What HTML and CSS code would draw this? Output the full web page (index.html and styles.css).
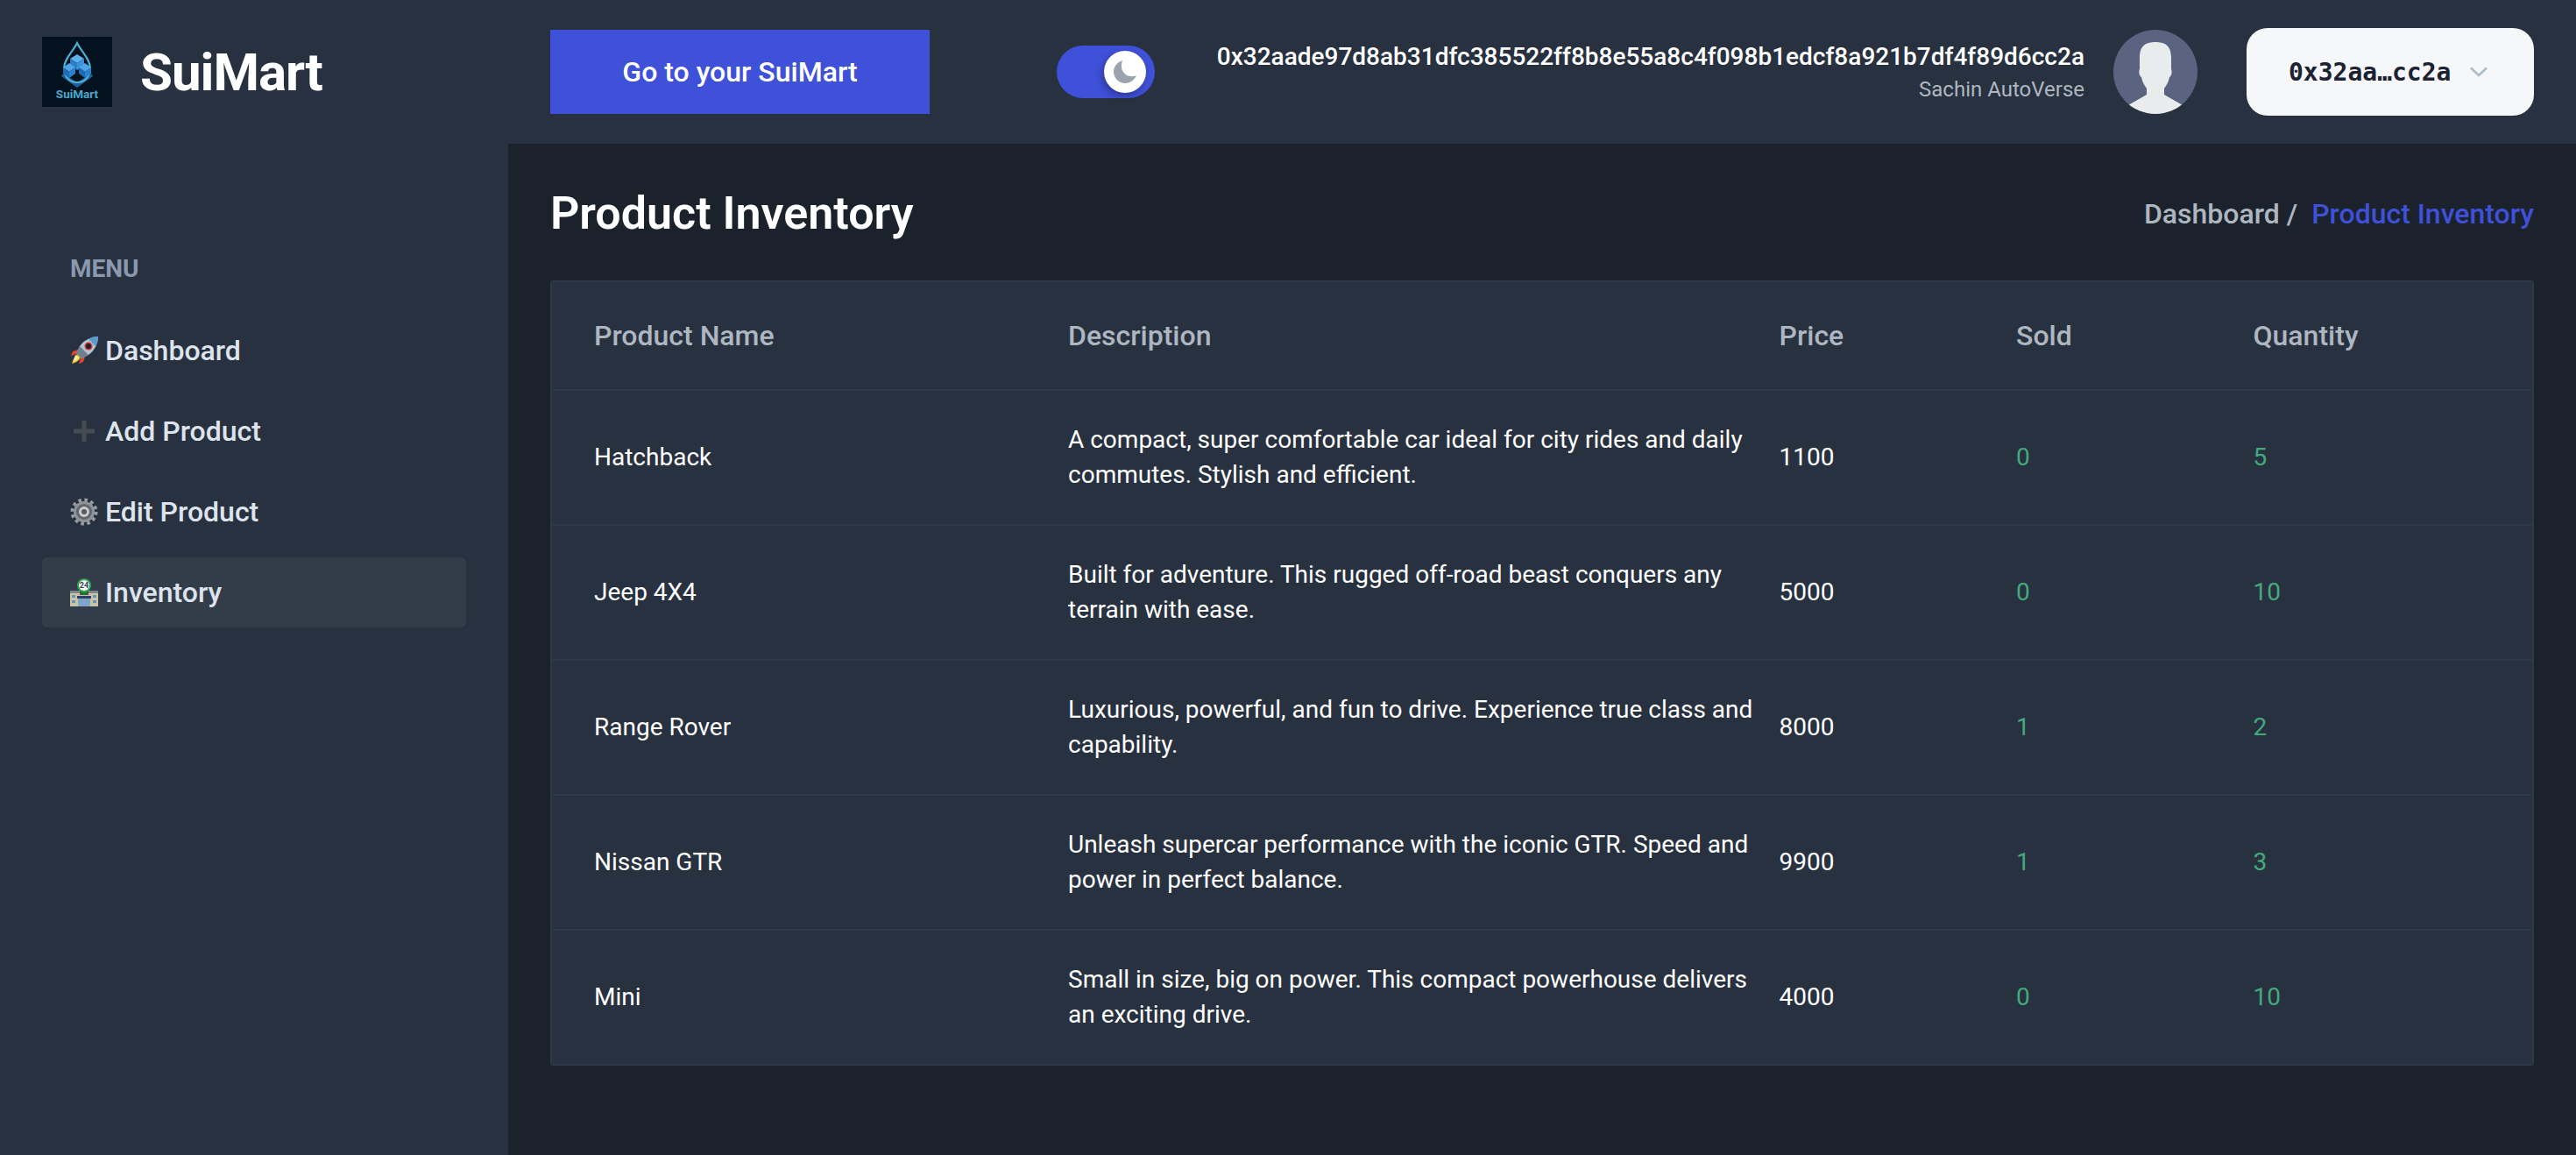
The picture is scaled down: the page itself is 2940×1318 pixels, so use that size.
FILE: index.html
```html
<!DOCTYPE html>
<html lang="en">
<head>
<meta charset="UTF-8">
<meta name="viewport" content="width=device-width, initial-scale=1.0">
<title>SuiMart - Product Inventory</title>
<link rel="stylesheet" href="styles.css">
</head>
<body>

<div class="layout">
    <aside class="sidebar">
        <div class="brand">
            <svg class="brand-logo" viewBox="0 0 80 80">
                <rect width="80" height="80" fill="#04121f"/>
                <path d="M24 42 L40 52 L56 42 L58 45 L40 58 L22 45 Z" fill="#1f5f9e"/>
                <path d="M40 7 C44 16 55 25 55 36 C55 46 48 52 40 52 C32 52 25 46 25 36 C25 25 36 16 40 7 Z" fill="none" stroke="#4fb3d6" stroke-width="2"/>
                <path d="M40 20 L48 25 L40 30 L32 25 Z" fill="#5cb2ec"/>
                <path d="M32 25 L40 30 L40 38 L32 33 Z" fill="#2d7fc9"/>
                <path d="M48 25 L40 30 L40 38 L48 33 Z" fill="#3a92da"/>
                <path d="M31 30 L38 35 L31 40 L24 35 Z" fill="#4ea4e4"/>
                <path d="M49 30 L56 35 L49 40 L42 35 Z" fill="#4ea4e4"/>
                <path d="M24 35 L31 40 L31 47 L24 42 Z" fill="#1f6cb5"/>
                <path d="M38 35 L31 40 L31 47 L38 42 Z" fill="#2b82cf"/>
                <path d="M42 35 L49 40 L49 47 L42 42 Z" fill="#1f6cb5"/>
                <path d="M56 35 L49 40 L49 47 L56 42 Z" fill="#2b82cf"/>
                <text class="logo-text" x="40" y="70" text-anchor="middle">SuiMart</text>
            </svg>
            <span class="brand-name">SuiMart</span>
        </div>

        <nav class="menu">
            <h3 class="menu-title">MENU</h3>
            <ul class="menu-list">
                <li class="menu-item">
                    <svg class="menu-icon" viewBox="0 0 32 32">
                        <path d="M9 15 L3 17 L1 22 L7 20 Z" fill="#e8412c"/>
                        <path d="M17 23 L15 29 L10 31 L12 25 Z" fill="#e8412c"/>
                        <path d="M8 20 C5 23 3 27 2 31 C6 30 10 28 12 24 Z" fill="#f6c02c"/>
                        <path d="M6 21 C5 24 4 27 4 29 C6 28 9 26 10 24 Z" fill="#fdf0a0"/>
                        <path d="M32 0 C24 0 16 4 11 11 L7 19 L13 25 L21 21 C28 16 32 8 32 0 Z" fill="#b4c4d2"/>
                        <path d="M32 0 C27 0 24 1 21 3 L29 11 C31 8 32 4 32 0 Z" fill="#5c9ad0"/>
                        <path d="M7 19 L13 25 L21 21 L11 11 Z" fill="#6f8094"/>
                        <circle cx="21" cy="11" r="4.5" fill="#d8372a"/>
                        <circle cx="21" cy="11" r="3" fill="#1b2430"/>
                    </svg>
                    Dashboard
                </li>
                <li class="menu-item">
                    <svg class="menu-icon" viewBox="0 0 32 32">
                        <path d="M13.5 4 H18.5 V13.5 H28 V18.5 H18.5 V28 H13.5 V18.5 H4 V13.5 H13.5 Z" fill="#474b52"/>
                    </svg>
                    Add Product
                </li>
                <li class="menu-item">
                    <svg class="menu-icon" viewBox="0 0 32 32">
                        <circle cx="16" cy="16" r="13.5" fill="none" stroke="#9a9ea4" stroke-width="4" stroke-dasharray="3.5 3.57"/>
                        <circle cx="16" cy="16" r="12" fill="#8f9398"/>
                        <circle cx="16" cy="16" r="9" fill="#63676d"/>
                        <circle cx="16" cy="16" r="6" fill="#c9ccd0"/>
                        <circle cx="16" cy="16" r="3" fill="#55585d"/>
                    </svg>
                    Edit Product
                </li>
                <li class="menu-item active">
                    <svg class="menu-icon" viewBox="0 0 32 32">
                        <rect x="0" y="15" width="32" height="17" fill="#c9c4a8"/>
                        <rect x="0" y="14" width="32" height="3" fill="#7d8590"/>
                        <rect x="2" y="19" width="4" height="3" fill="#6d93b0"/>
                        <rect x="2" y="25" width="4" height="3" fill="#6d93b0"/>
                        <rect x="26" y="19" width="4" height="3" fill="#6d93b0"/>
                        <rect x="26" y="25" width="4" height="3" fill="#6d93b0"/>
                        <rect x="8" y="20" width="16" height="3" fill="#31406b"/>
                        <rect x="9" y="23" width="14" height="9" fill="#7fa6c6"/>
                        <rect x="11" y="14" width="10" height="5" fill="#2c6b3a"/>
                        <circle cx="16" cy="8" r="8" fill="#35a350"/>
                        <circle cx="16" cy="8" r="6" fill="#f6f6f2"/>
                        <text class="store-text" x="16" y="11" text-anchor="middle">24</text>
                    </svg>
                    Inventory
                </li>
            </ul>
        </nav>
    </aside>

    <div class="content">
        <header class="topbar">
            <button class="store-btn">Go to your SuiMart</button>
            <div class="topbar-right">
                <div class="toggle">
                    <span class="toggle-knob">
                        <svg class="moon" viewBox="0 0 28 28">
                            <path d="M11 1 C5 3 1 8 1 14 C1 21 7 27 14 27 C20 27 25 23 27 18 C25 19 23 19 21 19 C15 19 10 14 10 8 C10 6 10 3 11 1 Z" fill="#9ca3af"/>
                        </svg>
                    </span>
                </div>
                <div class="user-info">
                    <div class="user-address">0x32aade97d8ab31dfc385522ff8b8e55a8c4f098b1edcf8a921b7df4f89d6cc2a</div>
                    <div class="user-name">Sachin AutoVerse</div>
                </div>
                <svg class="avatar" viewBox="0 0 96 96">
                    <circle cx="48" cy="48" r="48" fill="#5a6380"/>
                    <clipPath id="avatarClip"><circle cx="48" cy="48" r="48"/></clipPath>
                    <path clip-path="url(#avatarClip)" d="M48 14 C38 14 30 17 30 32 L30 44 C29 48 29 52 32 54 C33 60 36 64 38 67 L38 74 L17 86 L17 96 L79 96 L79 86 L58 74 L58 67 C60 64 63 60 64 54 C67 52 67 48 66 44 L66 32 C66 17 58 14 48 14 Z" fill="#e8ecec"/>
                </svg>
                <button class="wallet-btn">
                    0x32aa…cc2a
                    <svg class="chevron" viewBox="0 0 20 12">
                        <path d="M1 1.5 L10 10 L19 1.5" fill="none" stroke="#a9bcc9" stroke-width="2.5"/>
                    </svg>
                </button>
            </div>
        </header>

        <main class="main">
            <div class="page-head">
                <h2 class="page-title">Product Inventory</h2>
                <div class="breadcrumb">
                    <span>Dashboard /</span>
                    <span class="breadcrumb-current">Product Inventory</span>
                </div>
            </div>

            <div class="card">
                <div class="row head">
                    <div>Product Name</div>
                    <div>Description</div>
                    <div>Price</div>
                    <div>Sold</div>
                    <div>Quantity</div>
                </div>
                <div class="row">
                    <div>Hatchback</div>
                    <div>A compact, super comfortable car ideal for city rides and daily commutes. Stylish and efficient.</div>
                    <div>1100</div>
                    <div class="green">0</div>
                    <div class="green">5</div>
                </div>
                <div class="row">
                    <div>Jeep 4X4</div>
                    <div>Built for adventure. This rugged off-road beast conquers any terrain with ease.</div>
                    <div>5000</div>
                    <div class="green">0</div>
                    <div class="green">10</div>
                </div>
                <div class="row">
                    <div>Range Rover</div>
                    <div>Luxurious, powerful, and fun to drive. Experience true class and capability.</div>
                    <div>8000</div>
                    <div class="green">1</div>
                    <div class="green">2</div>
                </div>
                <div class="row">
                    <div>Nissan GTR</div>
                    <div>Unleash supercar performance with the iconic GTR. Speed and power in perfect balance.</div>
                    <div>9900</div>
                    <div class="green">1</div>
                    <div class="green">3</div>
                </div>
                <div class="row">
                    <div>Mini</div>
                    <div>Small in size, big on power. This compact powerhouse delivers an exciting drive.</div>
                    <div>4000</div>
                    <div class="green">0</div>
                    <div class="green">10</div>
                </div>
            </div>
        </main>
    </div>
</div>

</body>
</html>
```

FILE: styles.css
```css
body {
    margin: 0;
    background-color: #1b222c;
    color: #aeb7c0;
    font-family: Roboto, "Liberation Sans", sans-serif;
    font-size: 32px;
}
.layout {
    display: flex;
    height: 1318px;
    overflow: hidden;
}

/* sidebar */
.sidebar {
    flex: none;
    width: 580px;
    background-color: #28313f;
}
.brand {
    display: flex;
    align-items: center;
    gap: 32px;
    height: 164px;
    padding-left: 48px;
    box-sizing: border-box;
}
.brand-logo {
    flex: none;
    width: 80px;
    height: 80px;
}
.logo-text {
    font-size: 13.5px;
    font-weight: 700;
    fill: #4aa8cc;
}
.store-text {
    font-size: 9px;
    font-weight: 700;
    fill: #33406b;
}
.brand-name {
    color: #fff;
    font-size: 60px;
    font-weight: 700;
    letter-spacing: -1px;
}
.menu {
    padding: 123px 48px 0;
}
.menu-title {
    margin: 0 0 33px 32px;
    color: #8a99af;
    font-size: 28px;
    line-height: 40px;
    font-weight: 700;
}
.menu-list {
    display: flex;
    flex-direction: column;
    gap: 12px;
    margin: 0;
    padding: 0;
    list-style: none;
}
.menu-item {
    display: flex;
    align-items: center;
    gap: 8px;
    height: 80px;
    padding-left: 32px;
    border-radius: 6px;
    color: #dee4ee;
    font-size: 32px;
    font-weight: 500;
}
.menu-item.active {
    background-color: #333d4a;
}
.menu-icon {
    flex: none;
    width: 32px;
    height: 32px;
}

/* top bar */
.content {
    flex: 1;
    min-width: 0;
}
.topbar {
    display: flex;
    align-items: center;
    justify-content: space-between;
    height: 164px;
    padding: 0 48px;
    background-color: #28313f;
}
.store-btn {
    width: 433px;
    height: 96px;
    border: none;
    background-color: #3f50d9;
    color: #fff;
    font-family: inherit;
    font-size: 32px;
    font-weight: 500;
}
.topbar-right {
    display: flex;
    align-items: center;
}
.toggle {
    display: flex;
    align-items: center;
    justify-content: flex-end;
    width: 112px;
    height: 60px;
    padding-right: 10px;
    box-sizing: border-box;
    border-radius: 30px;
    background-color: #3f50d9;
}
.toggle-knob {
    display: flex;
    align-items: center;
    justify-content: center;
    width: 48px;
    height: 48px;
    border-radius: 50%;
    background-color: #fff;
    box-shadow: -2px 4px 8px rgba(0, 0, 0, 0.3);
}
.moon {
    width: 28px;
    height: 28px;
}
.user-info {
    width: 1005px;
    margin: 0 33px 0 56px;
    text-align: right;
    white-space: nowrap;
}
.user-address {
    color: #fff;
    font-size: 28px;
    font-weight: 500;
    line-height: 40px;
}
.user-name {
    font-size: 24px;
    line-height: 34px;
}
.avatar {
    flex: none;
    width: 96px;
    height: 96px;
}
.wallet-btn {
    display: flex;
    align-items: center;
    gap: 22px;
    width: 328px;
    height: 100px;
    margin-left: 56px;
    padding-left: 48px;
    border: none;
    border-radius: 24px;
    background-color: #f6f7f9;
    color: #1a2233;
    font-family: "DejaVu Sans Mono", monospace;
    font-size: 28px;
    font-weight: 700;
}
.chevron {
    width: 20px;
    height: 12px;
}

/* main area */
.main {
    padding: 48px;
}
.page-head {
    display: flex;
    align-items: center;
    justify-content: space-between;
    margin-bottom: 44px;
}
.page-title {
    margin: 0;
    color: #fff;
    font-size: 52px;
    font-weight: 600;
    line-height: 64px;
}
.breadcrumb {
    display: flex;
    gap: 16px;
    font-weight: 500;
}
.breadcrumb-current {
    color: #3f50d9;
}
.card {
    border: 2px solid #2f3a48;
    border-radius: 4px;
    background-color: #28313f;
}
.row {
    display: grid;
    grid-template-columns: 2fr 3fr 1fr 1fr 1fr;
    align-items: center;
    padding: 36px 48px;
    border-bottom: 2px solid #2f3a48;
    color: #fff;
    font-size: 28px;
    line-height: 40px;
}
.row:last-child {
    border-bottom: none;
}
.row.head {
    padding: 37px 48px;
    color: #aeb7c0;
    font-size: 32px;
    font-weight: 500;
    line-height: 48px;
}
.green {
    color: #44a97c;
}
```
